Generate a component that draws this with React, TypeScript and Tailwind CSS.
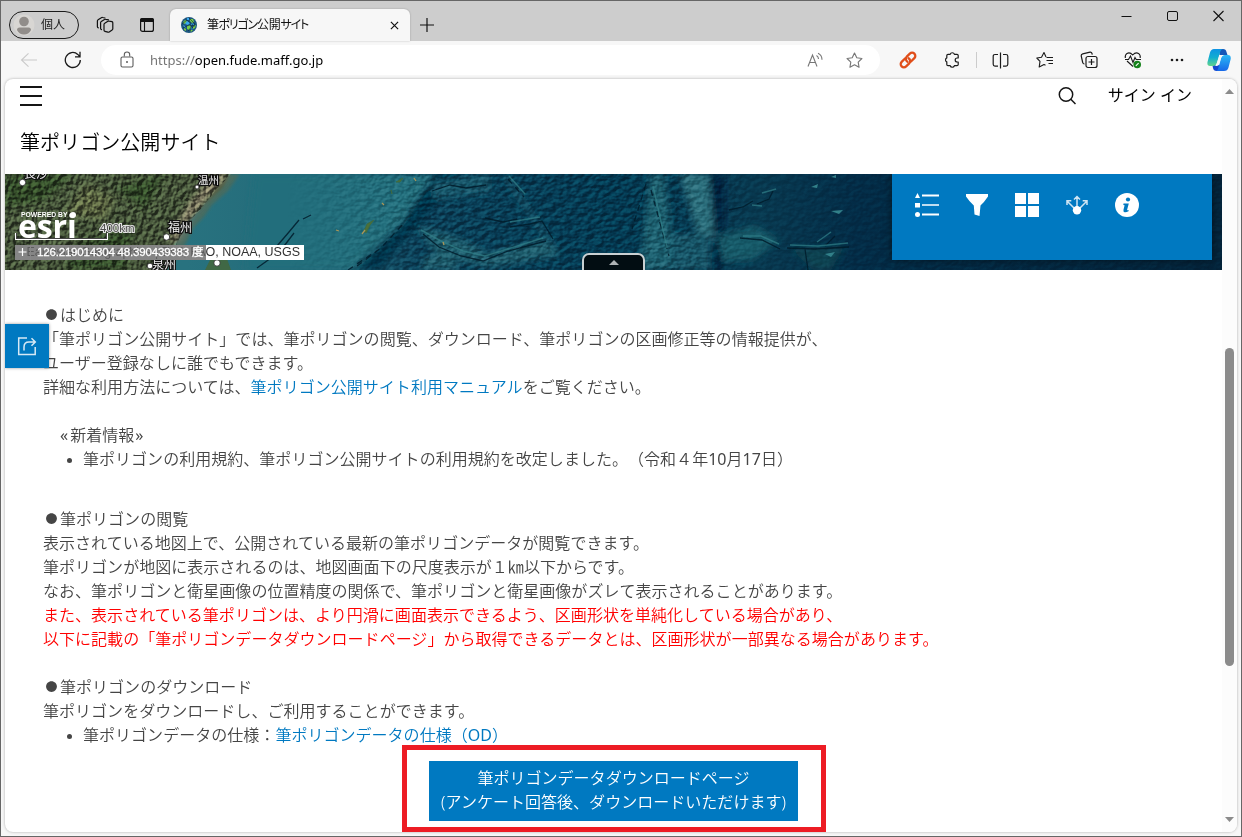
import React from "react";

type IconProps = { children: React.ReactNode; className?: string; size?: number; stroke?: string; width?: number };

function Icon({ children, className = "", size = 20, stroke = "#1f1f1f", width = 1.2 }: IconProps) {
  return (
    <svg
      width={size}
      height={size}
      viewBox="0 0 20 20"
      fill="none"
      stroke={stroke}
      strokeWidth={width}
      strokeLinecap="round"
      strokeLinejoin="round"
      className={`block shrink-0 ${className}`}
    >
      {children}
    </svg>
  );
}

const STAR = "M10 2.2l2.4 4.9 5.4.8-3.9 3.8.9 5.4-4.8-2.6-4.8 2.6.9-5.4L2.2 7.9l5.4-.8z";

function TabStrip() {
  return (
    <div className="flex h-10 shrink-0 bg-[#cdcdcd]">
      <div className="mt-[10px] ml-2 flex h-7 w-[70px] items-center rounded-full border border-[#1b1b1b] pl-[3px]">
        <svg width="22" height="22" viewBox="0 0 22 22" className="shrink-0">
          <circle cx="11" cy="11" r="10.5" fill="#d8d6d3" />
          <circle cx="11" cy="7.500" r="4.800" fill="#918d8a" />
          <path d="M4 16q0-2.500 2.500-2.500h9q2.500 0 2.500 2.500c-1.500 3-4 4.500-7 4.500s-5.500-1.500-7-4.500z" fill="#918d8a" />
        </svg>
        <span className="ml-[6px] text-[12px] leading-none text-[#1b1b1b]">個人</span>
      </div>
      <svg width="18" height="18" viewBox="0 0 18 18" className="mt-[15px] ml-[17px] shrink-0" fill="none" stroke="#111" strokeWidth="1.200" strokeLinejoin="round" strokeLinecap="round">
        <path d="M8 8.500q0-.8.700-1.200l3.200-2q.6-.4 1.300-.2l2.700.6q.9.200.9 1.100v6q0 .8-.7 1.200l-2.900 2q-.6.400-1.300.2l-3-.8q-.9-.2-.9-1.100z" />
        <path d="M5.500 13.600q-.9-.2-.9-1.100V6.700q0-.8.700-1.200l3.200-2q.6-.4 1.300-.2l2.700.6" />
        <path d="M2.300 11.800q-.9-.2-.9-1.100V4.900q0-.8.700-1.200l3.200-2q.6-.4 1.300-.2l2.400.5" />
      </svg>
      <svg width="16" height="16" viewBox="0 0 16 16" className="mt-4 ml-[25px] shrink-0">
        <rect x="1.600" y="1.600" width="12.800" height="12.800" rx="2" fill="none" stroke="#111" strokeWidth="1.200" />
        <path d="M1 5V3q0-2 2-2h10q2 0 2 2v2z" fill="#111" />
        <path d="M5.500 5v9" stroke="#111" strokeWidth="1.100" />
      </svg>
      <div className="relative mt-2 ml-[15px] flex h-8 w-[240px] items-center rounded-t-[6px] bg-[#f7f7f7] shadow-[0_0_2px_rgba(0,0,0,0.25)]">
        <svg width="16" height="16" viewBox="0 0 16 16" className="ml-[11px] shrink-0">
          <circle cx="8" cy="8" r="8" fill="#1d567f" />
          <path d="M2 5l2-2 2 1-1 2-2 1zM9 2l3 0 1 3-2 1-2-2zM6 9l3-1 1 3-2 2-2-1zM12 9l3-1-1 3-2 1zM3 11l2 1 0 2-2-1zM9 13l3 0-2 2z" fill="#77cc48" />
          <path d="M6 4l3 2-2 2-3-1zM10 6l3 1-1 2-2-1zM2 8l2 1 1 2-2-1zM6 1l2 0 0 2-2 0zM10 10l2 2-2 1z" fill="#3aa9ef" />
          <path d="M1 7l5-4 6 5-5 6M8 1l6 6-5 7M2 11l6-3 6 1" fill="none" stroke="#0c2638" strokeWidth=".6" />
        </svg>
        <span className="-mt-px ml-[10px] whitespace-nowrap text-[12px] leading-none tracking-[-1.200px] text-[#111] [font-feature-settings:'palt']">
          <span className="tracking-[-0.500px]">筆</span>ポリゴン<span className="tracking-[-0.200px]">公開</span>サイト
        </span>
        <svg width="9" height="9" viewBox="0 0 10 10" className="mt-[1px] mr-[11px] ml-auto">
          <path d="M1 1l8 8M9 1L1 9" stroke="#111" strokeWidth="1.300" />
        </svg>
      </div>
      <svg width="14" height="14" viewBox="0 0 14 14" className="mt-[17px] ml-[10px]">
        <path d="M7 0v14M0 7h14" stroke="#111" strokeWidth="1.200" />
      </svg>
      <div className="mt-[9px] mr-[17px] ml-auto flex h-3 items-center gap-[35px]">
        <svg width="11" height="12" viewBox="0 0 11 12"><path d="M.5 6.500h10" stroke="#111" /></svg>
        <svg width="11" height="12" viewBox="0 0 11 12"><rect x=".5" y="1.500" width="10" height="9" rx="1.500" fill="none" stroke="#111" /></svg>
        <svg width="11" height="12" viewBox="0 0 11 12"><path d="M.5 1l10 10M10.500 1L.5 11" stroke="#111" strokeWidth="1.100" /></svg>
      </div>
    </div>
  );
}

function Toolbar() {
  return (
    <div className="flex h-[38px] shrink-0 items-center bg-[#f7f7f7]">
      <svg width="18" height="16" viewBox="0 0 18 16" className="ml-[19px] shrink-0">
        <path d="M17 8H1.500M8.500 1.300L1.500 8l7 6.700" fill="none" stroke="#cacaca" strokeWidth="1.100" />
      </svg>
      <svg width="18" height="18" viewBox="0 0 18 18" className="ml-[26px] shrink-0">
        <path d="M16.300 9A7.500 7.500 0 1 1 13.800 3.400l2 2.200M16 .8v5h-5" fill="none" stroke="#1b1b1b" strokeWidth="1.300" />
      </svg>
      <div className="ml-[19px] flex h-[30px] w-[779px] shrink-0 items-center rounded-full bg-white">
        <svg width="14" height="17" viewBox="0 0 14 17" className="mb-[2px] ml-[19px] shrink-0">
          <rect x="1" y="6" width="12" height="10" rx="1.500" fill="none" stroke="#5c5c5c" strokeWidth="1.100" />
          <path d="M4.300 5.500V3.700a2.700 2.700 0 0 1 5.400 0v1.800" fill="none" stroke="#5c5c5c" strokeWidth="1.100" />
          <circle cx="7" cy="11" r="1" fill="#5c5c5c" />
        </svg>
        <span className="mt-px ml-4 whitespace-nowrap font-['Noto_Sans'] text-[13px] text-[#767676]">
          https://<span className="text-black">open.fude.maff.go.jp</span>
        </span>
        <svg width="17" height="17" viewBox="0 0 17 17" className="mr-[21px] ml-auto" fill="none" stroke="#777" strokeWidth="1.100">
          <path d="M1 14.500L5.500 3 10 14.500M2.600 10.500h5.800M9.500 3.500q2 1.200 2 3.500M11 1.200q4 1.800 4 6.500" />
        </svg>
        <Icon size={19} stroke="#777" className="mr-4"><path d={STAR} /></Icon>
      </div>
      <svg width="18" height="18" viewBox="0 0 18 18" className="ml-[19px] shrink-0" fill="none" stroke="#e04e1a" strokeLinecap="round">
        <g transform="rotate(-45 9 9)">
          <path d="M8 5.800H3.200a3.200 3.200 0 0 0 0 6.400h4.300a3.200 3.200 0 0 0 3.100-4" strokeWidth="2.300" />
          <path d="M10 12.200h4.800a3.200 3.200 0 0 0 0-6.400h-4.300a3.200 3.200 0 0 0-3.100 4" strokeWidth="2.300" />
        </g>
      </svg>
      <svg width="18" height="18" viewBox="0 0 18 18" className="ml-[26px] shrink-0" fill="none" stroke="#1b1b1b" strokeWidth="1.200" strokeLinejoin="round">
        <path d="M5 3.300h2.200a2.200 2.200 0 0 1 4.200 0H14q1.200 0 1.200 1.200V7h-1a1.800 1.800 0 0 0 0 4h1v2.500q0 1.200-1.200 1.200h-2.600a2.200 2.200 0 0 1-4.200 0H5q-1.200 0-1.200-1.200v-2.600a2.200 2.200 0 0 1 0-4V4.500q0-1.200 1.200-1.200z" />
      </svg>
      <div className="ml-[15px] h-4 w-px shrink-0 bg-[#ccc]" />
      <svg width="17" height="17" viewBox="0 0 17 17" className="ml-[15px] shrink-0" fill="none" stroke="#1b1b1b" strokeWidth="1.200">
        <path d="M6 2.500H3q-1.800 0-1.800 1.800v8q0 1.800 1.800 1.800h3M11 2.500h3q1.800 0 1.800 1.800v8q0 1.800-1.800 1.800h-3M8.500.5v16" />
      </svg>
      <svg width="18" height="18" viewBox="0 0 18 18" className="ml-[27px] shrink-0" fill="none" stroke="#1b1b1b" strokeWidth="1.100" strokeLinejoin="round">
        <path d="M10 6L8 1.500 5.500 6.200.8 7 4 10.300 3.200 16 8 13.500l1.500.8M10.500 6.500H17M10.500 9.500H17M12.500 12.500H17" />
      </svg>
      <svg width="18" height="18" viewBox="0 0 18 18" className="ml-[26px] shrink-0" fill="none" stroke="#1b1b1b" strokeWidth="1.200">
        <path d="M4.500 13Q3 13 2.700 11.500L1.200 5Q1 3.300 2.700 2.900L10 1.100q1.500-.2 1.900 1.100l.4 1.500" />
        <rect x="6" y="5.500" width="11" height="11" rx="2" /><path d="M11.500 8v6M8.500 11h6" />
      </svg>
      <svg width="18" height="18" viewBox="0 0 18 18" className="ml-[26px] shrink-0" fill="none" stroke="#1b1b1b" strokeWidth="1.100">
        <path d="M1.300 7Q.8 4 3 2.400 6 .8 8.700 4 11.500.8 14.500 2.400 16.700 4 16.200 7M3 10l6 5.500M1 8.500h3.500L6.500 5l2.500 6.500 2-5 1.200 2H17" />
        <circle cx="13.200" cy="13.500" r="3.800" fill="#16821b" stroke="none" /><path d="M11.800 14.800l2.800-2.700" stroke="#fff" />
      </svg>
      <svg width="14" height="4" viewBox="0 0 14 4" className="ml-[28px] shrink-0" fill="#1b1b1b">
        <circle cx="2" cy="2" r="1.300" /><circle cx="7" cy="2" r="1.300" /><circle cx="12" cy="2" r="1.300" />
      </svg>
      <svg width="24" height="24" viewBox="0 0 24 24" className="ml-[23px] shrink-0">
        <defs>
          <linearGradient id="cpA" x1="0" y1="0" x2="0" y2="1"><stop offset="0" stopColor="#0e93e4" /><stop offset=".5" stopColor="#12aed0" /><stop offset="1" stopColor="#62d48c" /></linearGradient>
          <linearGradient id="cpB" x1="0" y1="0" x2="0" y2="1"><stop offset="0" stopColor="#2ab8f5" /><stop offset="1" stopColor="#1768e8" /></linearGradient>
        </defs>
        <path d="M12 1h4q3 0 3.500 3l1 3-8 0z" fill="#1557b8" />
        <path d="M12 23H9.500Q6.500 23 6 20l-.6-3H14z" fill="#1546cf" />
        <path d="M7 1h9q-2 0-2.700 2.600L10 14.500Q9 18 6 18H3q-3.200 0-2.500-4L3 4.500Q4 1 7 1z" fill="url(#cpA)" />
        <path d="M17 23H8.500q2 0 2.700-2.600L14 10.500Q15 7 18 7h3q3.200 0 2.700 4L21.500 19.500Q20.500 23 17 23z" fill="url(#cpB)" />
        <path d="M12.500 7h4q-2 1-2.500 3l-1.800 6q-.6 2-2.700 2H8q1.300-1 2-3z" fill="#f7f7f7" />
      </svg>
    </div>
  );
}

function Terrain() {
  return (
    <svg width="1217" height="96" viewBox="0 0 1217 96" className="block">
      <defs>
        <linearGradient id="sea" x1="0" x2="1" y1="0" y2="0">
          <stop offset=".15" stopColor="#28727f" />
          <stop offset=".25" stopColor="#236a79" />
          <stop offset=".34" stopColor="#0b4059" />
          <stop offset=".5" stopColor="#043a53" />
          <stop offset=".62" stopColor="#083950" />
          <stop offset=".7" stopColor="#032c47" />
          <stop offset="1" stopColor="#04243b" />
        </linearGradient>
        <linearGradient id="fade" x1="0" x2="1" y1="0" y2="0">
          <stop offset="0" stopColor="#000" />
          <stop offset=".15" stopColor="#fff" />
          <stop offset=".42" stopColor="#fff" />
          <stop offset=".5" stopColor="#555" />
          <stop offset="1" stopColor="#444" />
        </linearGradient>
        <mask id="reliefMask"><rect x="280" width="937" height="96" fill="url(#fade)" /></mask>
        <filter id="soft" x="-20%" y="-20%" width="140%" height="140%"><feGaussianBlur stdDeviation="3.500" /></filter>
        <filter id="edge"><feGaussianBlur stdDeviation="1.500" /></filter>
        <filter id="fine"><feGaussianBlur stdDeviation=".6" /></filter>
        <filter id="relief" x="0" y="0" width="100%" height="100%">
          <feTurbulence type="fractalNoise" baseFrequency="0.140 0.220" numOctaves="3" seed="21" />
          <feColorMatrix type="matrix" values="0 0 0 0 0 0 0 0 0 0 0 0 0 0 0 1 0 0 0 0" />
          <feDiffuseLighting surfaceScale="3" diffuseConstant="1" lightingColor="#fff" colorInterpolationFilters="sRGB"><feDistantLight azimuth="225" elevation="30" /></feDiffuseLighting>
        </filter>
        <filter id="grain" x="0" y="0" width="100%" height="100%">
          <feTurbulence type="fractalNoise" baseFrequency="0.200" numOctaves="4" seed="3" />
          <feColorMatrix type="matrix" values="0 0 0 0 0 0 0 0 0 0 0 0 0 0 0 1 0 0 0 0" />
          <feDiffuseLighting surfaceScale="3.500" diffuseConstant=".95" lightingColor="#fff" colorInterpolationFilters="sRGB"><feDistantLight azimuth="225" elevation="30" /></feDiffuseLighting>
        </filter>
      </defs>
      <rect width="1217" height="96" fill="url(#sea)" />
      <g filter="url(#soft)">
        <path d="M250 0h178L395 50 345 96H240z" fill="#246e7c" />
        <path d="M430 0h26L374 96h-24l45-42z" fill="#04314a" />
        <path d="M425 8l60-8 0 18-55 8z" fill="#15566a" />
        <path d="M412 52q50 12 70 28l60-15 14 16-70 12-54-10z" fill="#1a5b6c" />
        <path d="M420 82l25 0 10 14h-40z" fill="#1c5c6c" />
        <path d="M500 2l14 20 20 30 14 20" fill="none" stroke="#155367" strokeWidth="5" />
        <path d="M645 0h14l12 96h-36z" fill="#1c6070" />
        <path d="M675 0h28l7 66-18-8z" fill="#2a6e7b" />
        <path d="M665 60h40v36h-40z" fill="#175567" />
        <path d="M706 0h12v96h-8z" fill="#021f3b" />
        <path d="M712 62l38-10 24 14-26 20-30 2z" fill="#195a69" />
        <path d="M785 74l55-2-14 24h-18z" fill="#0d4351" />
      </g>
      <g mask="url(#reliefMask)" className="mix-blend-soft-light">
        <rect x="280" width="937" height="96" filter="url(#relief)" opacity=".45" />
      </g>
      <g fill="none" stroke="#021c2c" strokeWidth="1.300" opacity=".85" filter="url(#fine)">
        <path d="M418 60l16 13 22 9 22 5 25-10 38-10M505 53l20-3 12-3 11 18M427 17l18-6 16 3 20-3M480 44l18 4 14-3M724 36l14-3 10-6M752 30l12-5 4-8M782 74l28 1 34-2M800 75l3 21M820 72l10-10M735 64l22 2 18 9" />
        <path d="M352 92l24-18 22-24M343 96l30-20M503 5l16 18M641 10l-14 45M646 16l18 66" strokeDasharray="6 5" />
        <path d="M272 72l12-14 10-12M276 76l13-17M298 45l8-4M252 94l14-10" />
      </g>
      <g fill="none" stroke="#328089" strokeWidth="1.500" opacity=".7" filter="url(#fine)">
        <path d="M416 56l20 11 22 10 22 5 58-18M505 48l30-5M785 71l28 1 30-3M812 68l14-10M504 2l16 18M648 12l14 62M738 62l18 0 18 8M757 19l14-4M747 31l10 1" />
      </g>
      <g fill="#328089" filter="url(#fine)">
        <path d="M826 3l5-2 0 3zM806 13l7-3-1 4zM826 37l12-1-4 4zM820 80l10-2-4 5z" />
      </g>
      <path d="M391 8l7-4-3 4zM386 16l1 4zM359 57l3-7 7-4-4 5-4 8z" stroke="#3f6a3f" fill="#4d7038" strokeWidth=".8" />
      <path d="M409 4l2 3M438 68l1 3M377 29l2 2M331 56l3 1M357 60l3-4" stroke="#a99658" strokeWidth="1.300" />
      <path d="M222 0h13l-12 17-16 14-8 12-10 10-8 16-8 14-8 13h-14z" fill="#456c62" filter="url(#edge)" />
      <g filter="url(#edge)">
        <path d="M-6-6h234l-11 20-15 14-9 10-10 10-8 14-8 15-10 24H-6z" fill="#46573a" />
      </g>
      <svg x="0" y="0" width="228" height="96" viewBox="0 0 228 96">
        <g filter="url(#soft)">
          <path d="M0 0h70L40 26 0 34zM70 70l60-20-10 46H60zM110 14l50-14-20 35z" fill="#364d2c" />
          <path d="M80 10l30 15-10 20-40-5z" fill="#5c6642" />
          <path d="M210 0h14l-22 24-16 20-12 24-10-2 20-36z" fill="#847d66" />
        </g>
      </svg>
      <rect width="240" height="96" filter="url(#grain)" opacity=".55" className="mix-blend-overlay [clip-path:polygon(0_0,226px_0,211px_16px,195px_36px,181px_50px,169px_76px,156px_96px,0_96px)]" />
      <path d="M205 86q8-7 16-4l5 14h-26z" fill="#3f6844" filter="url(#fine)" />
    </svg>
  );
}

function MapBanner() {
  return (
    <div className="relative h-24 w-[1217px] shrink-0 overflow-hidden">
      <Terrain />
      <svg width="310" height="96" viewBox="0 0 310 96" className="absolute top-0 left-0">
        <g fill="#f2f2f2" stroke="#111" strokeWidth="2.500" paintOrder="stroke" className="font-['Noto_Sans_CJK_JP',sans-serif]">
          <text x="19" y="4" fontSize="12">長沙</text>
          <text x="193" y="10" fontSize="10.500">温州</text>
          <text x="163" y="58" fontSize="12">福州</text>
          <text x="147" y="95" fontSize="12">泉州</text>
        </g>
        <g fill="#fff" stroke="#222" strokeWidth=".8">
          <circle cx="17.500" cy="8.500" r="3.200" /><circle cx="192" cy="13" r="2" /><circle cx="161.500" cy="63" r="3.200" /><circle cx="145" cy="92" r="2.800" /><circle cx="212" cy="89" r="3.200" />
        </g>
      </svg>
      <div className="absolute top-[37px] left-[16px] font-['Liberation_Sans',Arial,sans-serif] text-[6.800px] leading-[7px] font-bold whitespace-nowrap text-white">POWERED BY</div>
      <div className="absolute top-[39px] left-[13px] h-[25px] overflow-hidden font-['Open_Sans',sans-serif] text-[32px] leading-[26px] font-bold tracking-[-0.100px] text-white">esri</div>
      <div className="absolute top-[38px] left-[65px] size-[6px] rounded-full bg-white" />
      <div className="absolute top-[59px] left-[10px] h-[7px] w-[93px] border-x border-b border-white shadow-[inset_1px_-1px_0_#444,inset_-1px_0_0_#444]" />
      <svg width="46" height="16" viewBox="0 0 46 16" className="absolute top-[46px] left-[92px]">
        <text x="3" y="12" fontSize="11.500" fill="#4d4d4d" stroke="#e4e4e4" strokeWidth="2" paintOrder="stroke" className="font-['Liberation_Sans',Arial,sans-serif]">400km</text>
      </svg>
      <div className="absolute top-[71px] left-[10px] flex h-[15px] w-[289px] items-center justify-end overflow-hidden bg-white pr-1 font-['Liberation_Sans',Arial,sans-serif] text-[12.500px] whitespace-nowrap text-[#323232]">
        Earthstar Geographics | Esri, FAO, NOAA, USGS
      </div>
      <div className="absolute top-[71px] left-[10px] flex h-[15px] w-[191px] items-center bg-[#666]/80 font-['Liberation_Sans','Noto_Sans_CJK_JP',sans-serif] text-[11.500px] leading-[15px] whitespace-nowrap text-white">
        <svg width="15" height="15" viewBox="0 0 15 15" className="shrink-0">
          <path d="M7.500 3v8M3.500 7h8" stroke="#fff" strokeWidth="1.200" />
        </svg>
        <span className="h-full w-px bg-[#888]" />
        <span className="ml-[6px] tracking-[-0.180px] [-webkit-text-stroke:0.300px_white]">126.219014304 48.390439383 度</span>
      </div>
      <div className="absolute top-[79px] left-[577px] flex h-[22px] w-[63px] justify-center rounded-t-[7px] border-2 border-[#c9d0d2] bg-[#020d12]">
        <svg width="10" height="6" viewBox="0 0 10 6" className="mt-[5px]"><path d="M0 5L5 0l5 5z" fill="#aeb3b5" /></svg>
      </div>
      <div className="absolute top-0 left-[887px] flex h-[86px] w-[320px] gap-[26px] bg-[#0079c1] pt-[19px] pl-[23px] shadow-[0_0_8px_rgba(0,0,0,0.5)]">
        <svg width="24" height="24" viewBox="0 0 24 24" fill="#fff">
          <path d="M2.500 0L5 5H0zM0 10h5v4.500H0zM7 1.500h17v2H7zM7 20.500h17v2H7z" />
          <path d="M7 11h17v2H7z" opacity=".75" />
          <circle cx="2.500" cy="21.500" r="2.500" />
        </svg>
        <svg width="24" height="24" viewBox="0 0 24 24" fill="#fff"><path d="M1 1h22v2.500q-4 6-7.500 9L14.500 23 9.500 21.500 8.800 12.500Q4 8 1 3.500z" /></svg>
        <svg width="24" height="24" viewBox="0 0 24 24" fill="#fff"><path d="M0 0h11v11H0zM13 0h11v11H13zM0 13h11v11H0zM13 13h11v11H13z" /></svg>
        <svg width="24" height="24" viewBox="0 0 24 24" fill="none" stroke="#cfe5f3" strokeWidth="1.500">
          <path d="M12 15V4M9 6.500l3-3 3 3M9 15L2 8M2 12V7.700h4.300M15 15l7-7M22 12V7.700h-4.300" />
          <circle cx="12" cy="17.300" r="4.200" fill="#fff" stroke="none" />
        </svg>
        <svg width="24" height="24" viewBox="0 0 24 24">
          <circle cx="12" cy="12" r="12" fill="#fff" />
          <circle cx="13" cy="6.500" r="2.100" fill="#0079c1" />
          <path d="M8.500 10.500h5.300l-1.700 6.300q-.2.900 1.600.1l-.2 1.300q-2.300 1.400-4 1-1.500-.4-1-2.500l1.100-4.500-1.300-.2z" fill="#0079c1" />
        </svg>
      </div>
    </div>
  );
}

function SectionTitle({ children, className = "" }: { children: string; className?: string }) {
  return (
    <p className={`flex h-6 ${className}`}>
      <span className="w-[17px] text-center text-[12px] leading-[26px]">●</span>
      <span>{children}</span>
    </p>
  );
}

function Article() {
  return (
    <div className="relative mt-[33px] ml-[38px] text-[16px] leading-6 [font-weight:350] tracking-[0.030px] whitespace-nowrap text-[#454545]">
      <SectionTitle>はじめに</SectionTitle>
      <p>「筆ポリゴン公開サイト」では、筆ポリゴンの閲覧、ダウンロード、筆ポリゴンの区画修正等の情報提供が、</p>
      <p>ユーザー登録なしに誰でもできます。</p>
      <p>詳細な利用方法については、<a className="text-[#0079c1]">筆ポリゴン公開サイト利用マニュアル</a>をご覧ください。</p>
      <p className="mt-6 ml-[17px]"><span className="font-normal">«</span><span className="mr-px ml-[2px]">新着情報</span><span className="font-normal">»</span></p>
      <ul className="ml-10 list-disc marker:text-[13px]">
        <li>筆ポリゴンの利用規約、筆ポリゴン公開サイトの利用規約を改定しました。（令和４年<span className="font-normal">10</span>月<span className="font-normal">17</span>日）</li>
      </ul>
      <SectionTitle className="mt-9">筆ポリゴンの閲覧</SectionTitle>
      <p>表示されている地図上で、公開されている最新の筆ポリゴンデータが閲覧できます。</p>
      <p>筆ポリゴンが地図に表示されるのは、地図画面下の尺度表示が１㎞以下からです。</p>
      <p>なお、筆ポリゴンと衛星画像の位置精度の関係で、筆ポリゴンと衛星画像がズレて表示されることがあります。</p>
      <div className="text-[#ff0000]">
        <p>また、表示されている筆ポリゴンは、より円滑に画面表示できるよう、区画形状を単純化している場合があり、</p>
        <p>以下に記載の「筆ポリゴンデータダウンロードページ」から取得できるデータとは、区画形状が一部異なる場合があります。</p>
      </div>
      <SectionTitle className="mt-6">筆ポリゴンのダウンロード</SectionTitle>
      <p>筆ポリゴンをダウンロードし、ご利用することができます。</p>
      <ul className="ml-10 list-disc marker:text-[13px]">
        <li>筆ポリゴンデータの仕様：<a className="text-[#0079c1]">筆ポリゴンデータの仕様（<span className="font-normal">OD</span>）</a></li>
      </ul>
      <div className="-mt-[2px] ml-[359px] h-[87px] w-[424px] border-[5px] border-[#ed1c24] pt-[11px] pl-[22px]">
        <a className="flex h-[60px] w-[369px] flex-col items-center justify-center bg-[#0079c1] pb-[2px] text-white">
          <span className="leading-6">筆ポリゴンデータダウンロードページ</span>
          <span className="leading-6">(アンケート回答後、ダウンロードいただけます)</span>
        </a>
      </div>
    </div>
  );
}

export default function App() {
  return (
    <div className="flex h-[837px] w-[1242px] flex-col overflow-hidden border border-[#666] bg-[#f7f7f7] font-['Noto_Sans','Noto_Sans_CJK_JP',sans-serif] [text-spacing-trim:space-all]">
      <TabStrip />
      <Toolbar />
      <div className="ml-1 flex h-[753px] w-[1232px] shrink-0 overflow-hidden rounded-lg bg-white shadow-[0_0_3px_rgba(0,0,0,0.3)]">
        <main className="relative flex w-[1217px] shrink-0 flex-col">
          <header className="flex h-[37px] shrink-0 items-start">
            <div className="mt-[7px] ml-[15px] flex w-[22px] flex-col gap-[7px]">
              <span className="h-[2px] bg-[#151515]" />
              <span className="h-[2px] bg-[#151515]" />
              <span className="h-[2px] bg-[#151515]" />
            </div>
            <svg width="19" height="19" viewBox="0 0 19 19" className="mt-2 ml-auto" fill="none" stroke="#151515" strokeWidth="1.500">
              <circle cx="8" cy="7.500" r="6.700" /><path d="M12.800 12.300l4.700 4.700" />
            </svg>
            <span className="mt-1 mr-[30px] ml-[31px] text-[16px] leading-6 text-black">サイン イン</span>
          </header>
          <h1 className="ml-[15px] h-[58px] shrink-0 pt-[12px] text-[20px] leading-[30px] [font-weight:350] tracking-[0.060px] text-black">筆ポリゴン公開サイト</h1>
          <MapBanner />
          <Article />
          <div className="absolute top-[245px] left-0 flex size-11 items-center justify-center bg-[#0079c1] shadow-[0_0_3px_rgba(0,0,0,0.4)]">
            <svg width="20" height="20" viewBox="0 0 20 20" fill="none" stroke="#d7e9f5" strokeWidth="1.500">
              <path d="M10 2H1.700v16.500h16.500V11M7 14.500V11q0-5 5-5h6M14.500 2.200L18.300 6l-3.800 3.800" />
            </svg>
          </div>
        </main>
        <div className="flex w-[15px] flex-col items-center bg-[#fcfcfc]">
          <svg width="9" height="5" viewBox="0 0 9 5" className="mt-[10px]"><path d="M0 5L4.500 0 9 5z" fill="#8b8b8b" /></svg>
          <div className="mt-[254px] h-[318px] w-[9px] rounded-full bg-[#8b8b8b]" />
          <svg width="9" height="5" viewBox="0 0 9 5" className="mt-auto mb-[10px]"><path d="M0 0l4.500 5L9 0z" fill="#8b8b8b" /></svg>
        </div>
      </div>
    </div>
  );
}
